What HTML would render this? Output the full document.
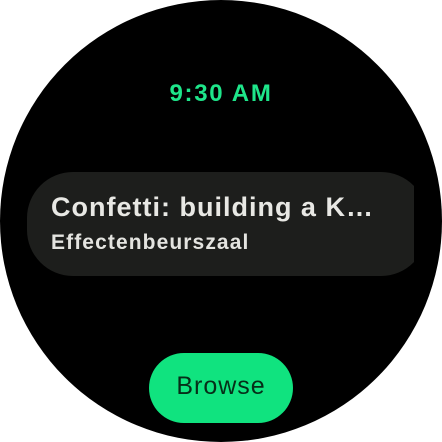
<!DOCTYPE html>
<html><head><style>
html,body{margin:0;padding:0;background:#fff;}
.w{position:relative;width:442px;height:442px;border-radius:50%;background:#000;overflow:hidden;font-family:"Liberation Sans",Roboto,sans-serif;}
.t{position:absolute;top:80px;left:0;width:442px;text-align:center;color:#1ee58a;font-size:24px;font-weight:bold;letter-spacing:1.7px;}
.c{position:absolute;left:27px;top:172px;width:400px;height:104px;border-radius:46px;background:#1d1e1c;}
.clip{position:absolute;left:0;top:0;width:414px;height:442px;overflow:hidden;}
.h{position:absolute;left:51px;top:192px;color:#e8e8e4;font-size:27px;font-weight:bold;letter-spacing:1px;white-space:nowrap;}
.s{position:absolute;left:51px;top:231px;color:#e4e4e0;font-size:21px;font-weight:bold;letter-spacing:1.1px;white-space:nowrap;}
.b{position:absolute;left:149px;top:353px;width:144px;height:70px;border-radius:35px;background:#10e37f;color:#062e18;font-size:25px;letter-spacing:1px;text-align:center;line-height:66px;}
</style></head><body>
<div class="w">
<div class="t">9:30 AM</div>
<div class="clip"><div class="c"></div></div>
<div class="h">Confetti: building a K…</div>
<div class="s">Effectenbeurszaal</div>
<div class="b">Browse</div>
</div>
</body></html>
